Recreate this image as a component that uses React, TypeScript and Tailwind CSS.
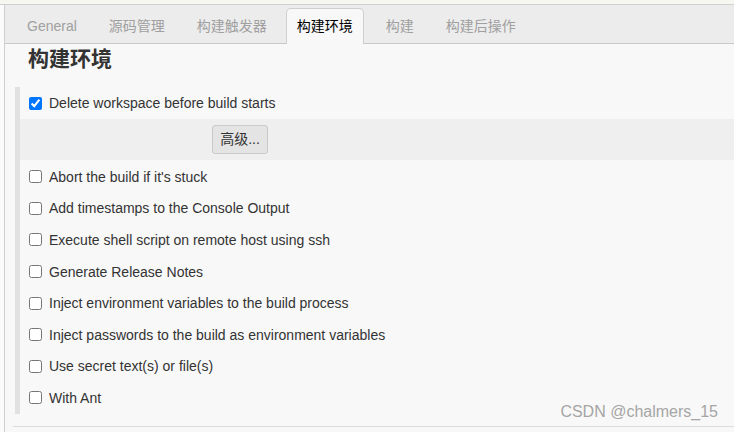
import React from "react";

const FONT = { fontFamily: '"Liberation Sans", Arial, "Noto Sans CJK SC", sans-serif' };

const tabs = ["General", "源码管理", "构建触发器", "构建环境", "构建", "构建后操作"];

const options = [
  "Abort the build if it's stuck",
  "Add timestamps to the Console Output",
  "Execute shell script on remote host using ssh",
  "Generate Release Notes",
  "Inject environment variables to the build process",
  "Inject passwords to the build as environment variables",
  "Use secret text(s) or file(s)",
  "With Ant",
];

function Row({ label, checked, h }: { label: string; checked?: boolean; h: string }) {
  return (
    <label className={`flex items-center pl-[9px] gap-[7px] ${h}`}>
      <input
        type="checkbox"
        defaultChecked={checked}
        className="m-0 w-[13px] h-[13px] accent-[#0075ff]"
      />
      <span className="text-[14px] text-[#333] leading-none">{label}</span>
    </label>
  );
}

export default function App() {
  return (
    <div
      className="relative w-[734px] h-[432px] overflow-hidden bg-[#f8f8f8] flex flex-col"
      style={FONT}
    >
      <div className="h-[4px] bg-[#f6f7f0] border-b border-[#d0d0d0] box-content" />
      <div className="flex flex-1">
        <div className="w-[4px] bg-[#fbfbfb]" />
        <div className="flex-1 border-l border-[#cfcfcf] flex flex-col">
          <div className="flex items-end h-[39px] bg-[#ececec] border-b border-[#c9c9c9] pl-[11px] gap-[10px]">
            {tabs.map((t) =>
              t === "构建环境" ? (
                <div
                  key={t}
                  className="-mb-px -ml-[2px] mr-[1px] h-[36px] px-[10px] flex items-center pb-[1px] bg-[#f8f8f8] border border-[#cfcfcf] border-b-0 rounded-t-[5px] text-[14px] text-black"
                >
                  {t}
                </div>
              ) : (
                <div
                  key={t}
                  className="h-[35px] px-[11px] flex items-center pt-[1px] text-[14px] text-[#a0a0a0]"
                >
                  {t}
                </div>
              )
            )}
          </div>
          <h2 className="pl-[23px] h-[26px] leading-[26px] text-[21px] font-bold text-[#333]" style={{ fontFamily: '"Noto Sans CJK SC", sans-serif' }}>
            构建环境
          </h2>
          <div className="mt-[17px] ml-[10px] flex">
            <div className="w-[5px] bg-[#e1e1e1]" />
            <div className="flex-1 flex flex-col">
              <Row label="Delete workspace before build starts" checked h="h-[32px]" />
              <div className="h-[41px] bg-[#efefef] flex items-center pl-[192px]">
                <button className="w-[56px] h-[29px] bg-[#e4e4e4] border border-[#cacaca] rounded-[3px] text-[14px] text-[#333] flex items-center justify-center pb-[1px]">
                  高级...
                </button>
              </div>
              <div className="h-[1px]" />
              {options.map((o) => (
                <Row key={o} label={o} h="h-[31.6px]" />
              ))}
            </div>
          </div>
          <div className="mt-[12px] ml-[8px] border-t border-[#dcdcdc]" />
        </div>
      </div>
      <div className="absolute right-[16px] top-[404px] text-[16px] leading-none text-[#a5a5a5]">
        CSDN @chalmers_15
      </div>
    </div>
  );
}
